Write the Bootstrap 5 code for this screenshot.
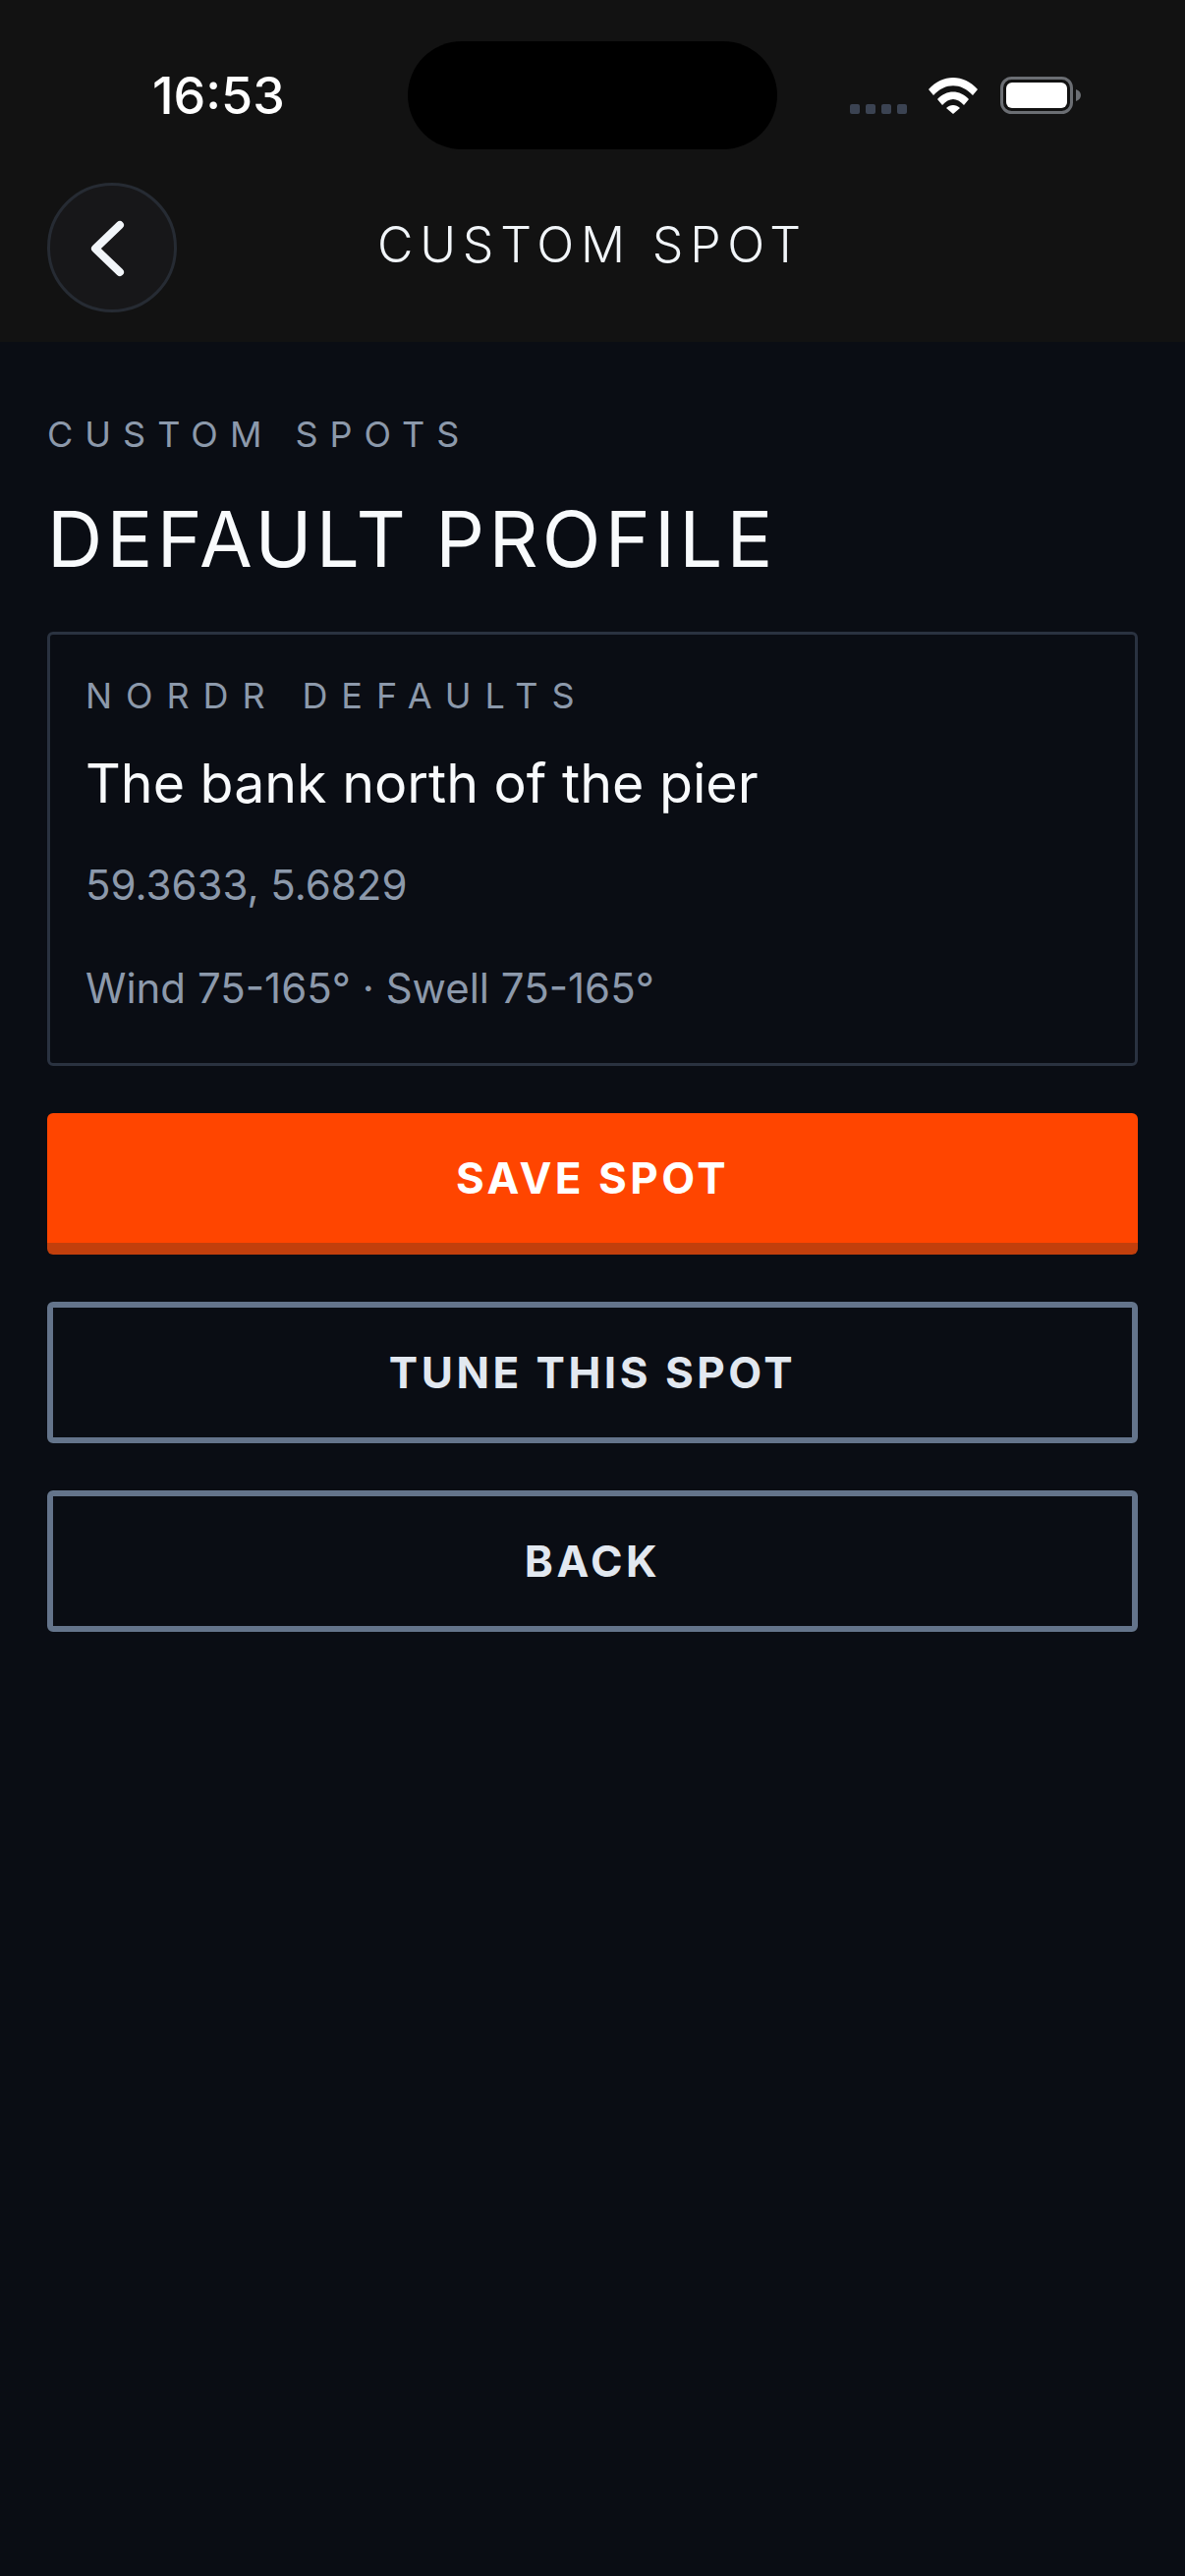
<!DOCTYPE html>
<html lang="en">
<head>
    <meta charset="UTF-8">
    <meta name="viewport" content="width=device-width, initial-scale=1.0">
    <title>Custom Spot</title>
    <link href="https://cdn.jsdelivr.net/npm/bootstrap@5.3.2/dist/css/bootstrap.min.css" rel="stylesheet">
    <style>
        body {
            background-color: #0a0d14;
            font-family: Inter, "Liberation Sans", sans-serif;
            min-height: 2622px;
        }
        .top-area {
            background-color: #121212;
            height: 348px;
            position: relative;
        }
        .status-row {
            height: 186px;
            padding: 78px 106px 0 155px;
        }
        .clock {
            color: #fff;
            font-size: 52px;
            font-weight: 500;
            line-height: 39px;
        }
        .island {
            position: absolute;
            left: 415px;
            top: 42px;
            width: 376px;
            height: 110px;
            background: #000;
            border-radius: 55px;
        }
        .sig-dots { gap: 6px; margin-right: 22px; }
        .sig-dot {
            width: 10px;
            height: 10px;
            border-radius: 2px;
            background: #3b4352;
        }
        .status-icons { height: 38px; }
        .wifi-icon { margin-right: 23px; }
        .head-row { height: 132px; padding-left: 48px; }
        .back-circle {
            width: 132px;
            height: 132px;
            border-radius: 50%;
            border: 3px solid #262b33;
            background: #171719;
            padding: 0;
            flex-shrink: 0;
        }
        .head-title {
            position: absolute;
            left: 0;
            right: 0;
            top: 222px;
            text-align: center;
            color: #f1f5f9;
            font-size: 50px;
            font-weight: 300;
            letter-spacing: 6.8px;
            line-height: 54px;
            margin: 0;
        }
        .page-body { padding: 0 48px; }
        .eyebrow {
            color: #8c99ab;
            font-size: 36px;
            font-weight: 400;
            letter-spacing: 12px;
            line-height: 42px;
            margin-top: 73px;
        }
        .card-eyebrow {
            color: #8c99ab;
            font-size: 36px;
            letter-spacing: 13.9px;
            line-height: 42px;
        }
        .page-title {
            color: #f8fafc;
            font-size: 78px;
            font-weight: 400;
            letter-spacing: 4.25px;
            line-height: 90px;
            margin: 41px 0 0;
        }
        .spot-card {
            background: transparent;
            border: 3px solid #2a3240;
            border-radius: 6px;
            margin-top: 49px;
            height: 442px;
            padding: 41px 36px 0;
        }
        .spot-name {
            color: #f8fafc;
            font-size: 55.5px;
            font-weight: 400;
            line-height: 68px;
            margin-top: 34px;
        }
        .spot-meta {
            color: #8c99ab;
            font-size: 42px;
            line-height: 52px;
            margin-top: 44px;
        }
        .spot-meta.spot-dirs { margin-top: 53px; }
        .act-btn {
            display: block;
            width: 100%;
            height: 144px;
            border-radius: 6px;
            font-size: 44px;
            font-weight: 700;
            letter-spacing: 3.5px;
            padding: 0;
            margin-top: 48px;
        }
        .act-save, .act-save:hover {
            background: #ff4500;
            color: #fff;
            border: 0;
            border-bottom: 12px solid #c23f0c;
        }
        .act-line, .act-line:hover {
            background: transparent;
            color: #e2e8f0;
            border: 6px solid #64748b;
        }
    </style>
</head>
<body>
    <div class="top-area">
        <div class="status-row d-flex justify-content-between align-items-start">
            <div class="clock">16:53</div>
            <div class="status-icons d-flex align-items-end">
                <div class="sig-dots d-flex">
                    <span class="sig-dot"></span><span class="sig-dot"></span><span class="sig-dot"></span><span class="sig-dot"></span>
                </div>
                <svg class="wifi-icon" width="50" height="38" viewBox="0 0 50 38">
                    <path d="M0 13 C14 -3 36 -3 50 13 L45 19 C33 6 17 6 5 19Z" fill="#fff"/>
                    <path d="M9 23 C18 13 32 13 41 23 L36 29 C29 21 21 21 14 29Z" fill="#fff"/>
                    <path d="M18 32 C22 28 28 28 32 32 L25 38Z" fill="#fff"/>
                </svg>
                <svg width="82" height="38" viewBox="0 0 82 38">
                    <rect x="1.5" y="1.5" width="71" height="35" rx="10" fill="none" stroke="#6b6e73" stroke-width="3"/>
                    <rect x="6" y="6" width="62" height="26" rx="6" fill="#fff"/>
                    <path d="M77 13 C80 14 82 16 82 19 C82 22 80 24 77 25Z" fill="#6b6e73"/>
                </svg>
            </div>
        </div>
        <div class="island"></div>
        <div class="head-row d-flex align-items-center">
            <button class="btn back-circle d-flex align-items-center justify-content-center" aria-label="Back">
                <svg width="60" height="70" viewBox="0 0 60 70">
                    <path d="M38 12 L13 36 L38 60" fill="none" stroke="#f1f5f9" stroke-width="8" stroke-linecap="round" stroke-linejoin="round"/>
                </svg>
            </button>
        </div>
        <h1 class="head-title">CUSTOM SPOT</h1>
    </div>

    <div class="page-body">
        <div class="eyebrow">CUSTOM SPOTS</div>
        <h2 class="page-title">DEFAULT PROFILE</h2>

        <div class="card spot-card">
            <div class="card-eyebrow">NORDR DEFAULTS</div>
            <div class="spot-name">The bank north of the pier</div>
            <div class="spot-meta">59.3633, 5.6829</div>
            <div class="spot-meta spot-dirs">Wind 75-165° · Swell 75-165°</div>
        </div>

        <button class="btn act-btn act-save">SAVE SPOT</button>
        <button class="btn act-btn act-line">TUNE THIS SPOT</button>
        <button class="btn act-btn act-line">BACK</button>
    </div>

    <script src="https://cdn.jsdelivr.net/npm/bootstrap@5.3.2/dist/js/bootstrap.bundle.min.js"></script>
</body>
</html>
